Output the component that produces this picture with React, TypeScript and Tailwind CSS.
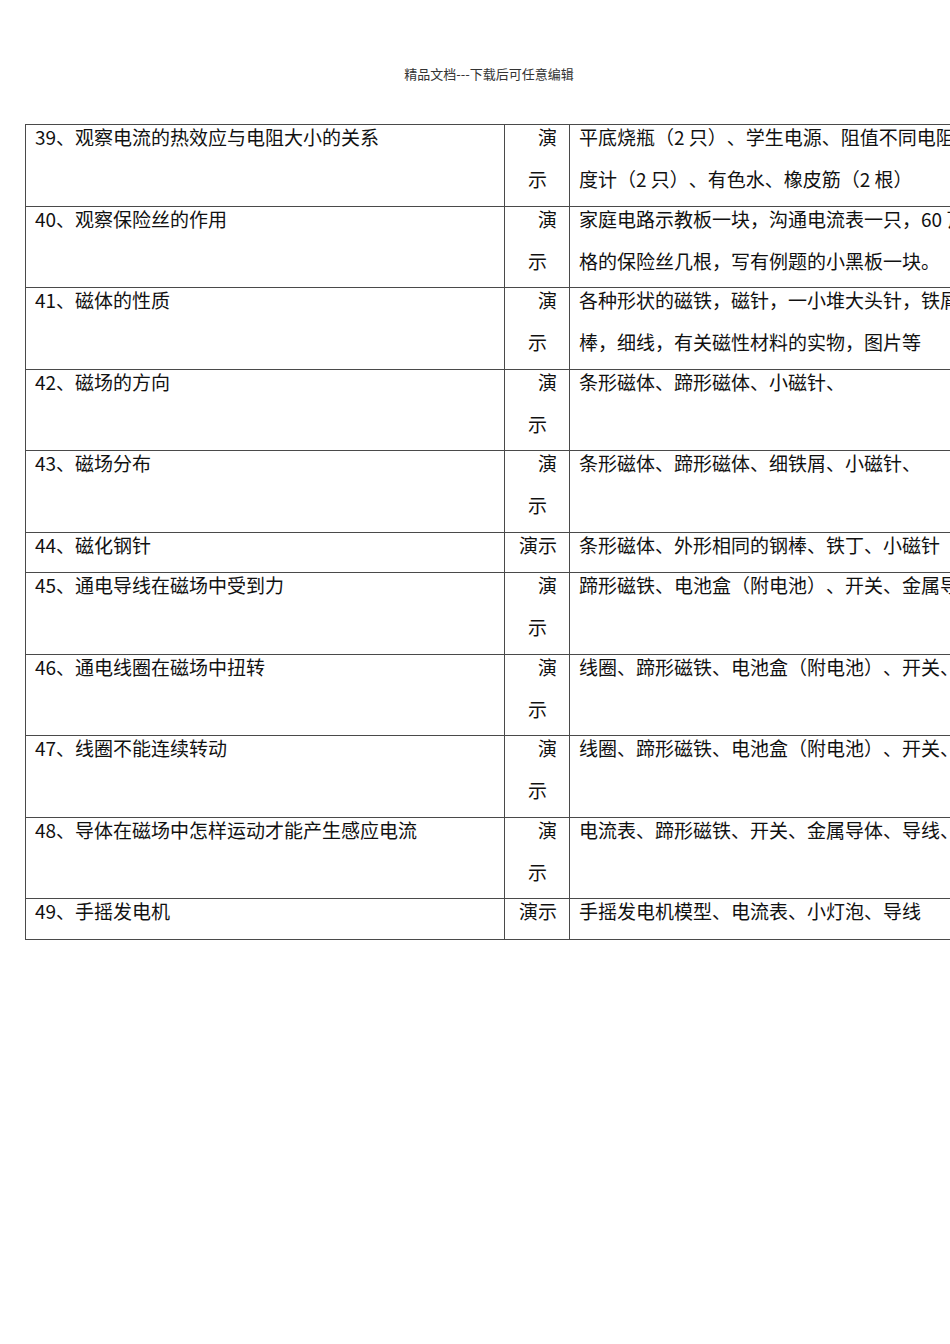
import React from "react";

type Row = { name: string; tall: boolean; items: string[] };

const rows: Row[] = [
  { name: "39、观察电流的热效应与电阻大小的关系", tall: true, items: ["平底烧瓶（2 只）、学生电源、阻值不同电阻丝、温", "度计（2 只）、有色水、橡皮筋（2 根）"] },
  { name: "40、观察保险丝的作用", tall: true, items: ["家庭电路示教板一块，沟通电流表一只，60 瓦灯泡", "格的保险丝几根，写有例题的小黑板一块。"] },
  { name: "41、磁体的性质", tall: true, items: ["各种形状的磁铁，磁针，一小堆大头针，铁屑", "棒，细线，有关磁性材料的实物，图片等"] },
  { name: "42、磁场的方向", tall: true, items: ["条形磁体、蹄形磁体、小磁针、"] },
  { name: "43、磁场分布", tall: true, items: ["条形磁体、蹄形磁体、细铁屑、小磁针、"] },
  { name: "44、磁化钢针", tall: false, items: ["条形磁体、外形相同的钢棒、铁丁、小磁针"] },
  { name: "45、通电导线在磁场中受到力", tall: true, items: ["蹄形磁铁、电池盒（附电池）、开关、金属导体"] },
  { name: "46、通电线圈在磁场中扭转", tall: true, items: ["线圈、蹄形磁铁、电池盒（附电池）、开关、导线"] },
  { name: "47、线圈不能连续转动", tall: true, items: ["线圈、蹄形磁铁、电池盒（附电池）、开关、导线"] },
  { name: "48、导体在磁场中怎样运动才能产生感应电流", tall: true, items: ["电流表、蹄形磁铁、开关、金属导体、导线、"] },
  { name: "49、手摇发电机", tall: false, items: ["手摇发电机模型、电流表、小灯泡、导线"] },
];

export default function App() {
  return (
    <div
      className="w-[950px] h-[1344px] overflow-hidden bg-white text-[#111] [text-spacing-trim:space-all]"
      style={{ fontFamily: '"Noto Sans CJK SC", "Noto Sans", sans-serif' }}
    >
      <div className="pt-[65px] pl-[28px] text-center text-[13px] leading-[18px] h-[83px] text-[#333]">
        精品文档---下载后可任意编辑
      </div>
      <div className="mt-[41px] ml-[25px] w-[1100px] border-l border-b border-[#4a4a4a] text-[19px]">
        {rows.map((r, i) => (
          <div
            key={i}
            className={`flex border-t border-[#4a4a4a] ${r.tall ? "h-[81.5px]" : "h-[40.75px]"}`}
          >
            <div className="w-[479px] shrink-0 border-r border-[#4a4a4a] pl-[9px] leading-[24px] whitespace-nowrap">
              {r.name}
            </div>
            <div className="w-[65px] shrink-0 border-r border-[#4a4a4a] leading-[24px] whitespace-nowrap">
              {r.tall ? (
                <>
                  <div className="h-[42px] text-right pr-[12px]">演</div>
                  <div className="pl-[23px]">示</div>
                </>
              ) : (
                <div className="text-right pr-[12px]">演示</div>
              )}
            </div>
            <div className="flex-1 pl-[9px] leading-[24px] whitespace-nowrap overflow-hidden">
              {r.items.map((t, j) => (
                <div key={j} className="h-[42px]">
                  {t}
                </div>
              ))}
            </div>
          </div>
        ))}
      </div>
    </div>
  );
}
